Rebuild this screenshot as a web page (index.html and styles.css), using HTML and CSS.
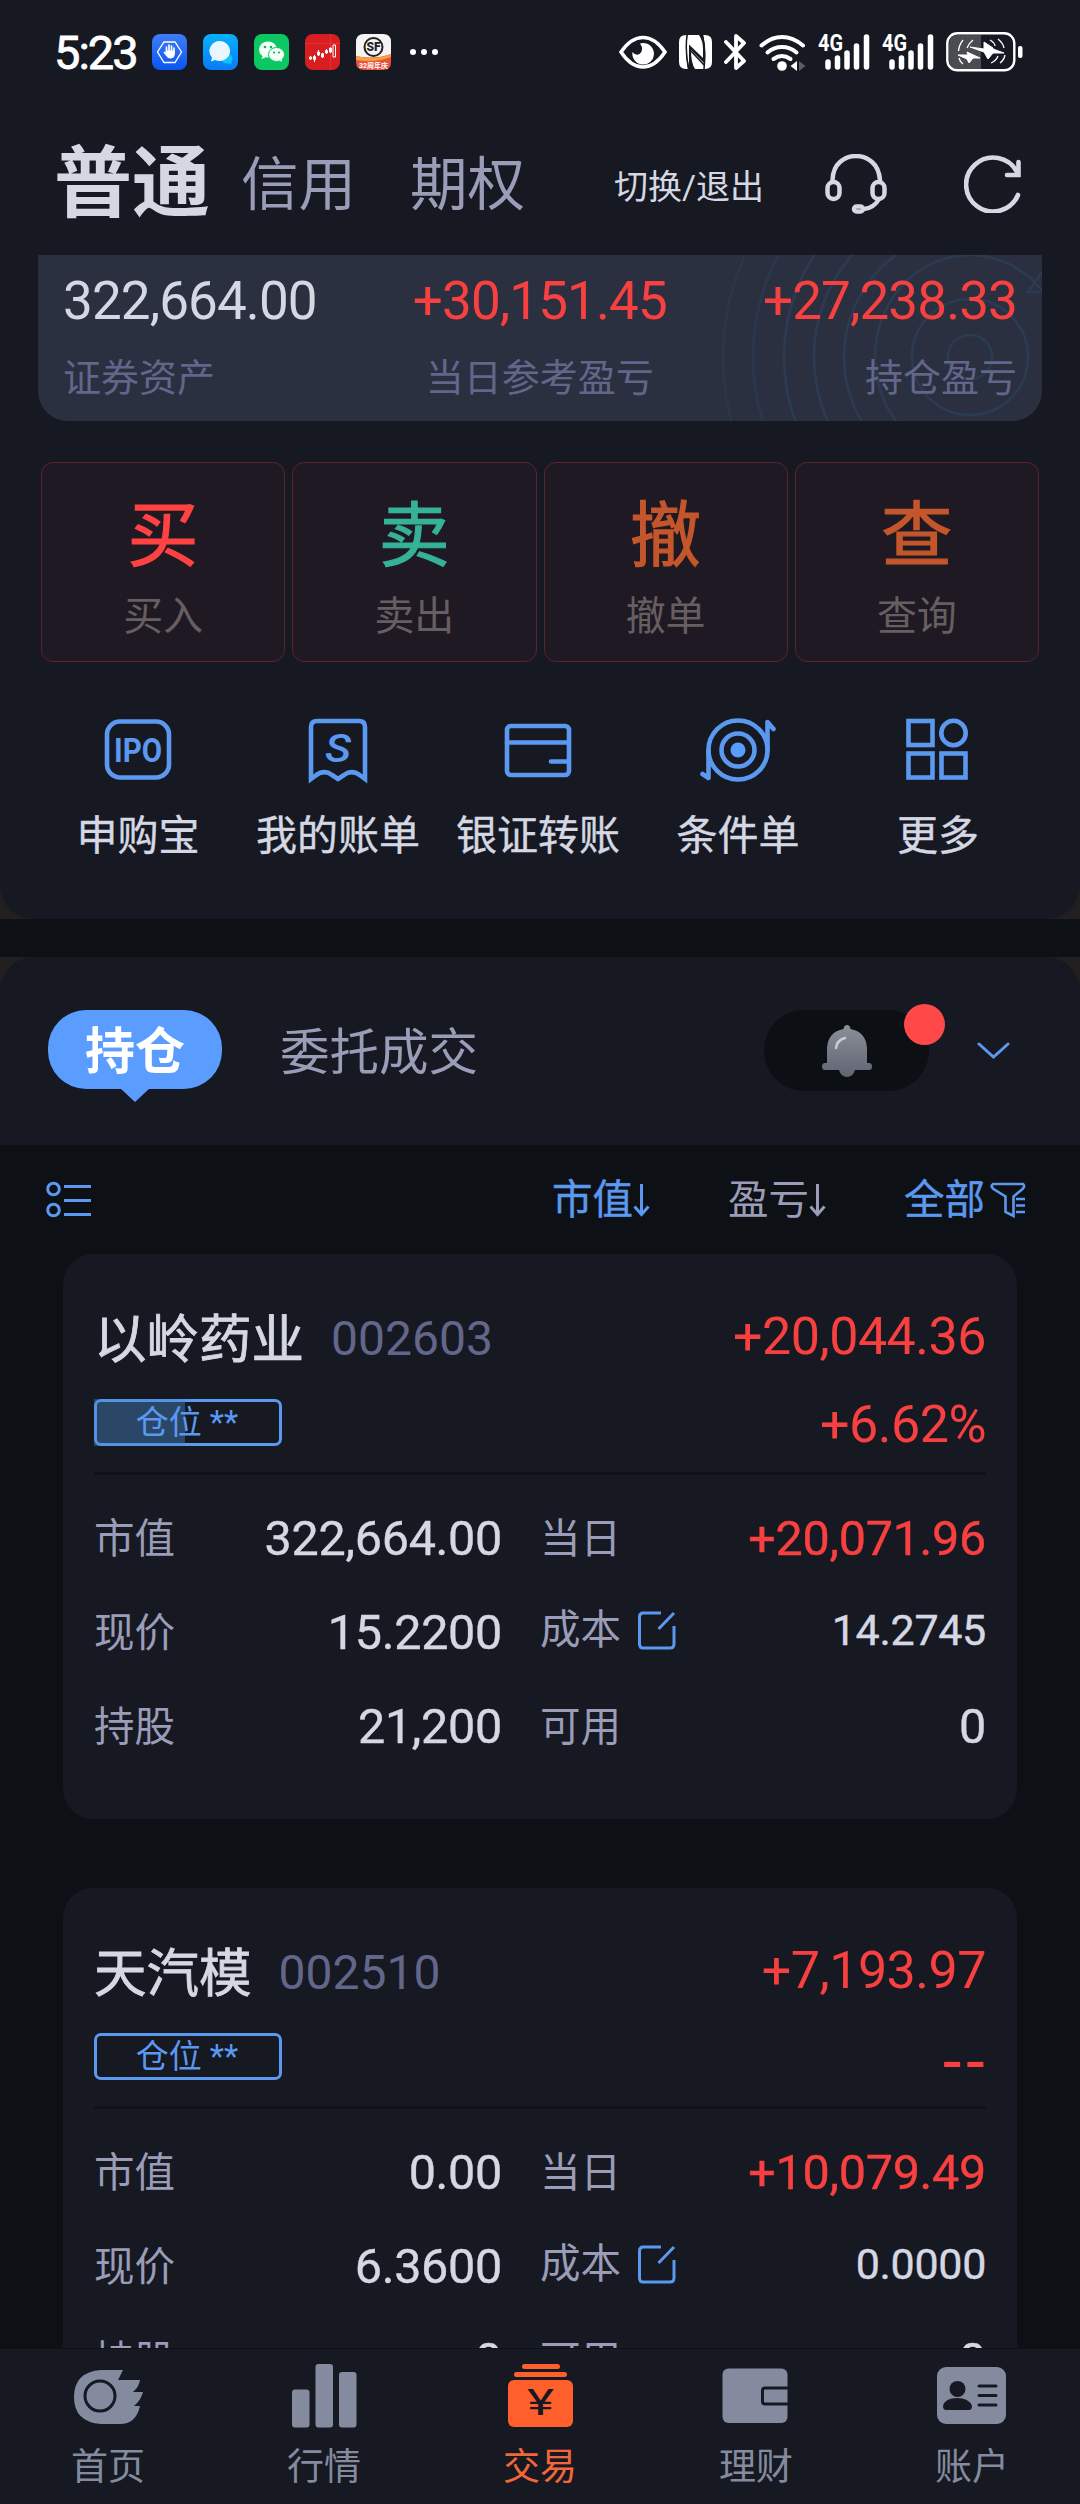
FILE: index.html
```html
<!DOCTYPE html>
<html lang="zh-CN">

<head>
  <meta charset="UTF-8">
  <meta name="viewport" content="width=device-width, initial-scale=1.0">
  <title>交易</title>
  <link rel="stylesheet" href="styles.css">
</head>

<body>
  <div class="screen">
    <div class="top-wrap">
      <div class="top">
        <!-- 状态栏 -->
        <div class="status">
          <span class="time">5:23</span>
          <div class="apps">
            <svg width="35" height="36" viewBox="0 0 35 36">
              <defs>
                <linearGradient id="g1" x1="0" y1="0" x2="0" y2="1"><stop offset="0" stop-color="#3f7cf7"/><stop offset="1" stop-color="#0b55f0"/></linearGradient>
              </defs>
              <rect width="35" height="36" rx="8" fill="url(#g1)"/>
              <path d="M12 8h11l6.500 10-6.500 10.500h-11L5.500 18z" fill="none" stroke="#fff" stroke-width="1.300"/>
              <path d="M14.500 18v-5M17 17v-6M19.500 17v-5M22 19v-5" stroke="#fff" stroke-width="1.700" stroke-linecap="round"/>
              <path d="M13.500 16.500h9.300v4q-.5 4-4.500 4-2.500 0-4.500-3l-2.500-3.200 1.200-.8 1.800 1.500z" fill="#fff"/>
            </svg>
            <svg width="35" height="36" viewBox="0 0 35 36">
              <defs>
                <linearGradient id="g2" x1="0" y1="0" x2="0" y2="1"><stop offset="0" stop-color="#08b0fb"/><stop offset="1" stop-color="#087cf5"/></linearGradient>
              </defs>
              <rect width="35" height="36" rx="8" fill="url(#g2)"/>
              <path d="M20 28a5.500 5 0 1 1 8 0l1 2-3-.5q-4 .5-6-1.500z" fill="#10c3ff"/>
              <path d="M17 7a10.500 10 0 1 1-5 19l-4 1.500 1-4A10.500 10 0 0 1 17 7z" fill="#e8f6ff"/>
            </svg>
            <svg width="35" height="36" viewBox="0 0 35 36">
              <rect width="35" height="36" rx="8" fill="#0cc863"/>
              <ellipse cx="14" cy="15.500" rx="9" ry="8" fill="#f4fff8"/>
              <path d="M9 21l-1.500 4 5-2z" fill="#f4fff8"/>
              <ellipse cx="22.500" cy="20.500" rx="8" ry="7" fill="#f4fff8" stroke="#0cc863"/>
              <path d="M25 26l3 2-.5-4z" fill="#f4fff8"/>
              <g fill="#0cb75a"><circle cx="11" cy="13" r="1.300"/><circle cx="17" cy="13" r="1.300"/><circle cx="20" cy="18.500" r="1.100"/><circle cx="25" cy="18.500" r="1.100"/></g>
            </svg>
            <svg width="35" height="36" viewBox="0 0 35 36">
              <rect width="35" height="36" rx="8" fill="#d91e22"/>
              <path d="M0 9.500h35M25.500 0v36" stroke="#e24145" stroke-width=".6"/>
              <g stroke="#fff" fill="none">
                <path d="M5.500 22v4M9.500 21v7M13.500 16v6M17.500 19v5M21.500 15v5M25.500 14v5" stroke-width="1"/>
                <path d="M4.500 23h2v2h-2zM8.500 22.500h2v3h-2zM12.500 18h2v3h-2zM16.500 19.500h2v3.500h-2zM20.500 16.500h2v2.500h-2zM24.500 14h2v4h-2zM28 11h2.500v12H28z" stroke-width="1"/>
              </g>
            </svg>
            <svg width="35" height="36" viewBox="0 0 35 36">
              <path d="M8 0h19q8 0 8 8v16H0V8q0-8 8-8z" fill="#f5f3f3"/>
              <path d="M0 22q18 4 35-2v8q0 8-8 8H8q-8 0-8-8z" fill="#e8553c"/>
              <path d="M0 22q18 5 35-2v3q-16 6-35 3z" fill="#f5a33a"/>
              <circle cx="17.500" cy="13" r="9" fill="none" stroke="#222" stroke-width="2"/>
              <text x="17.500" y="17.200" class="sf">SF</text>
              <text x="17.500" y="33.500" class="sf-year">32周年庆</text>
            </svg>
          </div>
          <svg class="more-dots" width="28" height="8" viewBox="0 0 28 8" fill="#fff"><circle cx="3" cy="4" r="3"/><circle cx="14" cy="4" r="3"/><circle cx="25" cy="4" r="3"/></svg>

          <div class="signals">
            <svg width="48" height="36" viewBox="0 0 48 36">
              <path d="M2 18Q12 3.500 24 3.500T46 18Q36 33 24 33T2 18z" fill="none" stroke="#fff" stroke-width="3.500"/>
              <path d="M24 9a10.800 10.800 0 1 1-10.500 9q3 4 7 2 5-4 .500-10.500z" fill="#fff"/>
            </svg>
            <svg width="33" height="34" viewBox="0 0 33 34">
              <path d="M7 0h1Q6 17 9 34H7q-7 0-7-7V7q0-7 7-7z" fill="#fff"/>
              <path d="M8.500 0H20q4 6 4 14v9L10 9.500V31Q6 14 8.500 0z" fill="#fff"/>
              <path d="M12 15l13 13V34h-9q-4-6-4-19z" fill="#fff"/>
              <path d="M24 0h2q7 0 7 7v20q0 7-7 7h-1q3-17-1-34z" fill="#fff"/>
              <path d="M12 16l13 14M8 0Q6 17 9.500 34M23.500 0q3.500 14 1.500 34" fill="none" stroke="#161922" stroke-width="1.500"/>
            </svg>
            <svg width="23" height="38" viewBox="0 0 23 38">
              <path d="M2 9l18 19-8 7V3l8 7L2 29" fill="none" stroke="#fff" stroke-width="3.800" stroke-linejoin="round" stroke-linecap="round"/>
            </svg>
            <svg width="47" height="38" viewBox="0 0 47 38">
              <g fill="none" stroke="#fff" stroke-width="4" stroke-linecap="round"><path d="M2.500 12.500Q12 4 23 4t21 8.500"/><path d="M8.500 19.500Q15 14 23 14t14.500 5.500"/><path d="M14.500 26q8.500-6 17 0"/></g>
              <circle cx="23" cy="33" r="4.800" fill="#fff"/>
              <path d="M38 28v10l-6.500-5z" fill="#fff"/><path d="M40 28v10l6.500-5z" fill="#5a5d66"/>
            </svg>
            <svg width="52" height="50" viewBox="0 -6 52 50">
              <text x="0" y="18" class="g4" textLength="25" lengthAdjust="spacingAndGlyphs">4G</text>
              <path d="M10 29v5M19.500 25v9M29 20v14M38.500 13v21M48.500 4v30" stroke="#fff" stroke-width="5.500" stroke-linecap="round"/>
            </svg>
            <svg width="52" height="50" viewBox="0 -6 52 50">
              <text x="0" y="18" class="g4" textLength="25" lengthAdjust="spacingAndGlyphs">4G</text>
              <path d="M10 29v5M19.500 25v9M29 20v14M38.500 13v21M48.500 4v30" stroke="#fff" stroke-width="5.500" stroke-linecap="round"/>
            </svg>
            <svg width="77" height="40" viewBox="0 0 77 40">
              <path d="M12 3h23v34H12q-9 0-9-9V12q0-9 9-9z" fill="#4a4c52"/>
              <rect x="1.300" y="1.300" width="67" height="37" rx="10" fill="none" stroke="#fff" stroke-width="2.400"/>
              <rect x="72" y="14" width="4.500" height="12" rx="2" fill="#fff"/>
              <path d="M12 23l10 0-1-3 13 6-7 0-4 5-2-4zM24 15l14 2 0-7 9 6 0 1 11 4-11 0-5 6-4-7z" fill="#fff" stroke="#fff"/>
              <path d="M17 8q-4 5-4.500 11M27 8q-4 3-6 8M44 8q5 3 5 6M52 7q5 4 6 9M13 26q1 4 4 6M45 31q5-2 7-7M54 31q4-3 5-8" fill="none" stroke="#fff" stroke-width="1.300"/>
            </svg>
          </div>
        </div>

        <!-- 顶部导航 -->
        <div class="header">
          <span class="h-tab active">普通</span>
          <span class="h-tab">信用</span>
          <span class="h-tab">期权</span>
          <span class="switch">切换/退出</span>
          <svg class="headset" width="62" height="60" viewBox="0 0 62 60" fill="none" stroke="#d5d8e3" stroke-width="4.500">
            <path d="M7.500 28V26Q8 14 15 8t16-6 16 6 8 18v2"/>
            <rect x="2.500" y="28" width="12" height="17" rx="6"/>
            <rect x="47.500" y="28" width="12" height="17" rx="6"/>
            <path d="M54 45q-5 9-15 10"/>
            <rect x="29" y="52.500" width="9" height="5" rx="2.500"/>
          </svg>
          <svg class="refresh" width="58" height="58" viewBox="0 0 58 58" fill="none" stroke="#d5d8e3" stroke-width="4.600" stroke-linecap="round">
            <path d="M54 40A27 27 0 1 1 53 17"/>
            <path d="M54.500 7v13H43"/>
          </svg>
        </div>

        <div class="asset">
          <svg class="rings" width="330" height="166" viewBox="0 0 330 166" fill="none" stroke="#2b3b52" stroke-width="2.600">
            <circle cx="258" cy="102" r="22"/>
            <circle cx="258" cy="102" r="58"/>
            <ellipse cx="258" cy="102" rx="95" ry="102"/>
            <circle cx="258" cy="102" r="126"/>
            <circle cx="258" cy="102" r="156"/>
            <circle cx="258" cy="102" r="186"/>
            <circle cx="258" cy="102" r="217" opacity=".8"/>
            <circle cx="258" cy="102" r="247" opacity=".5"/>
            <path d="M330 17l-14 20h14"/>
          </svg>
          <div class="asset-item">
            <div class="asset-num">322,664.00</div>
            <div class="asset-label">证券资产</div>
          </div>
          <div class="asset-item center">
            <div class="asset-num red">+30,151.45</div>
            <div class="asset-label">当日参考盈亏</div>
          </div>
          <div class="asset-item right">
            <div class="asset-num red">+27,238.33</div>
            <div class="asset-label">持仓盈亏</div>
          </div>
        </div>

        <div class="trade">
          <div class="trade-btn"><b class="buy">买</b><span>买入</span></div>
          <div class="trade-btn"><b class="sell">卖</b><span>卖出</span></div>
          <div class="trade-btn"><b class="orange">撤</b><span>撤单</span></div>
          <div class="trade-btn"><b class="orange">查</b><span>查询</span></div>
        </div>

        <div class="quick">
          <div class="quick-item">
            <svg width="70" height="70" viewBox="0 0 70 70">
              <rect x="4" y="6.500" width="62" height="56" rx="13"/>
              <text x="35" y="46.500" class="ipo" textLength="48" lengthAdjust="spacingAndGlyphs">IPO</text>
            </svg>
            <span>申购宝</span>
          </div>
          <div class="quick-item">
            <svg width="70" height="70" viewBox="0 0 70 70">
              <path d="M8 64V12q0-6 6-6h42q6 0 6 6v52l-4-3q-9-7-17-1l-6 4-6-4q-8-6-17 1z"/>
              <text x="35" y="47" class="bill-s" textLength="26" lengthAdjust="spacingAndGlyphs">S</text>
            </svg>
            <span>我的账单</span>
          </div>
          <div class="quick-item">
            <svg width="70" height="70" viewBox="0 0 70 70">
              <rect x="4" y="11" width="62" height="49" rx="4"/>
              <path d="M4 27.500h62M48 46.500h18" stroke-linecap="round"/>
            </svg>
            <span>银证转账</span>
          </div>
          <div class="quick-item">
            <svg width="78" height="70" viewBox="0 0 78 70">
              <circle cx="39" cy="35" r="29.500"/>
              <circle cx="39" cy="35" r="16.500"/>
              <circle cx="39" cy="35" r="7.500" class="solid"/>
              <path d="M9.500 35v28l-6-4M68.500 35V7l6 7" stroke-linecap="round" stroke-linejoin="round"/>
            </svg>
            <span>条件单</span>
          </div>
          <div class="quick-item">
            <svg width="70" height="70" viewBox="0 0 70 70">
              <rect x="5.500" y="6" width="24" height="24"/>
              <circle cx="50.500" cy="18" r="12.200"/>
              <rect x="5.500" y="38.500" width="24" height="24"/>
              <rect x="38.500" y="38.500" width="24" height="24"/>
            </svg>
            <span>更多</span>
          </div>
        </div>
      </div>
    </div>

    <!-- 持仓 / 委托 -->
    <div class="tabs-wrap">
      <div class="tabs">
        <div class="tab-pill">持仓</div>
        <div class="tab">委托成交</div>
        <div class="bell">
          <svg width="52" height="54" viewBox="0 0 52 54">
            <defs>
              <linearGradient id="bell" x1="0" y1="0" x2="0" y2="1"><stop offset="0" stop-color="#8b8f99"/><stop offset="1" stop-color="#5f6572"/></linearGradient>
            </defs>
            <path d="M26 1q3 0 3.500 4Q45 8 46 24v15h2q3 0 3 3.500T48 46H34q-2 7-8 7t-8-7H4q-3 0-3-3.500T4 39h2V24Q7 8 22.500 5 23 1 26 1z" fill="url(#bell)"/>
            <path d="M15 24q1-8 9-10" fill="none" stroke="#c9ccd3" stroke-width="2.500" stroke-linecap="round"/>
          </svg>
          <i class="badge"></i>
        </div>
        <svg class="chevron" width="33" height="18" viewBox="0 0 33 18"><path d="M2 2l14.500 13L31 2" fill="none" stroke="#5b98f0" stroke-width="3" stroke-linecap="round"/></svg>
      </div>
    </div>

    <div class="filter">
      <svg class="list-icon" width="46" height="38" viewBox="0 0 46 38" fill="none" stroke="#5b98f0" stroke-width="3">
        <circle cx="7.500" cy="8" r="5.800"/>
        <circle cx="7.500" cy="29" r="5.800"/>
        <path d="M18 5.500h27M18 19.500h27M18 33.500h27"/>
      </svg>
      <span class="sort on">市值<svg width="17" height="34" viewBox="0 0 17 34"><path d="M8.500 1v30M1.500 23.500l7 8 7-8"/></svg></span>
      <span class="sort">盈亏<svg width="17" height="34" viewBox="0 0 17 34"><path d="M8.500 1v30M1.500 23.500l7 8 7-8"/></svg></span>
      <span class="sort all on">全部<svg width="36" height="36" viewBox="0 0 36 36"><path d="M3 2h30q2.500 2-.5 5l-9 7.500V34l-8-4V14.500L3.500 7Q0 4 3 2zM26 17h9M26 23.500h9M26 30h9"/></svg></span>
    </div>

    <div class="list">
      <div class="stock">
        <div class="stock-head">
          <span class="name">以岭药业</span>
          <span class="code">002603</span>
          <span class="profit">+20,044.36</span>
        </div>
        <div class="stock-sub">
          <span class="tag"><i class="tag-fill" style="width: 50%"></i><em>仓位 **</em></span>
          <span class="profit">+6.62%</span>
        </div>
        <div class="line"></div>
        <div class="grid">
          <div class="cell"><label>市值</label><span>322,664.00</span></div>
          <div class="cell"><label>当日</label><span class="red">+20,071.96</span></div>
          <div class="cell"><label>现价</label><span>15.2200</span></div>
          <div class="cell cost"><label>成本</label><svg width="38" height="39" viewBox="0 0 38 39"><path d="M23 2H5Q1.500 2 1.500 6v27q0 4 3.500 4h27q4 0 4-4V15M20.500 18L36 2"/></svg><span>14.2745</span></div>
          <div class="cell"><label>持股</label><span>21,200</span></div>
          <div class="cell"><label>可用</label><span>0</span></div>
        </div>
      </div>

      <div class="stock">
        <div class="stock-head">
          <span class="name">天汽模</span>
          <span class="code">002510</span>
          <span class="profit">+7,193.97</span>
        </div>
        <div class="stock-sub">
          <span class="tag"><em>仓位 **</em></span>
          <span class="profit dash">--</span>
        </div>
        <div class="line"></div>
        <div class="grid">
          <div class="cell"><label>市值</label><span>0.00</span></div>
          <div class="cell"><label>当日</label><span class="red">+10,079.49</span></div>
          <div class="cell"><label>现价</label><span>6.3600</span></div>
          <div class="cell cost"><label>成本</label><svg width="38" height="39" viewBox="0 0 38 39"><path d="M23 2H5Q1.500 2 1.500 6v27q0 4 3.500 4h27q4 0 4-4V15M20.500 18L36 2"/></svg><span>0.0000</span></div>
          <div class="cell"><label>持股</label><span>0</span></div>
          <div class="cell"><label>可用</label><span>0</span></div>
        </div>
      </div>
    </div>

    <!-- 底部导航 -->
    <div class="nav">
      <div class="nav-item">
        <svg width="70" height="70" viewBox="0 0 70 70">
          <path d="M28 10h22l-5 10h22q-1 7-7 12h10q-2 8-9 14h6q-4 18-20 18H28Q1 62 1 37T28 10z"/>
          <circle cx="27" cy="36" r="15" fill="none" stroke="#161922" stroke-width="3"/>
        </svg>
        <span>首页</span>
      </div>
      <div class="nav-item">
        <svg width="70" height="70" viewBox="0 0 70 70">
          <rect x="3" y="29.500" width="17.500" height="38" rx="3"/>
          <rect x="26.500" y="4" width="17.500" height="63.500" rx="3"/>
          <rect x="50" y="12" width="17.500" height="55.500" rx="3"/>
        </svg>
        <span>行情</span>
      </div>
      <div class="nav-item on">
        <svg width="70" height="70" viewBox="0 0 70 70">
          <rect x="17" y="4" width="38" height="5" rx="2.500"/>
          <rect x="9" y="12" width="53" height="5" rx="2.500"/>
          <rect x="3" y="20" width="65" height="47" rx="6"/>
          <text x="35.500" y="54.500" class="yen" textLength="27" lengthAdjust="spacingAndGlyphs">¥</text>
        </svg>
        <span>交易</span>
      </div>
      <div class="nav-item">
        <svg width="70" height="70" viewBox="0 0 70 70">
          <rect x="1.500" y="8.500" width="65" height="54.500" rx="6"/>
          <path d="M67 28H44q-2.500 0-2.500 2.500v11q0 2.500 2.500 2.500h23" fill="none" stroke="#161922" stroke-width="3"/>
        </svg>
        <span>理财</span>
      </div>
      <div class="nav-item">
        <svg width="70" height="70" viewBox="0 0 70 70">
          <rect x="0" y="7" width="69" height="57" rx="9"/>
          <g fill="#161922">
            <circle cx="20.500" cy="29" r="8"/>
            <path d="M6 46q2-8 14-8t15 8q0 4-3 4H9q-3 0-3-4z"/>
          </g>
          <path d="M42 26h17M42 35.500h17M42 45h17" stroke="#161922" stroke-width="3" stroke-linecap="round"/>
        </svg>
        <span>账户</span>
      </div>
    </div>
  </div>
</body>

</html>
```
FILE: styles.css
```css
* {
  box-sizing: border-box;
}

body {
  margin: 0;
  background: #0d1014;
  font-family: Roboto, "Noto Sans CJK SC", sans-serif;
  color: #d5d8e3;
}

svg {
  flex: none;
  display: block;
}

.screen {
  width: 1080px;
  height: 2504px;
  display: flex;
  flex-direction: column;
  overflow: hidden;
}

/* 圆角外露出的底色 */
.top-wrap,
.tabs-wrap {
  background: #211f1f;
  flex: none;
}

.top {
  height: 919px;
  background: #161922;
  border-radius: 0 0 34px 34px;
}

.red {
  color: #f94040;
}

/* 状态栏 */
.status {
  height: 103px;
  display: flex;
  align-items: center;
  padding-left: 54px;
  color: #fff;
}

.time {
  width: 98px;
  font-size: 47px;
  letter-spacing: -2px;
  line-height: 60px;
  padding-top: 2px;
  -webkit-text-stroke: 0.8px #fff;
}

.apps {
  display: flex;
  gap: 16px;
}

.sf {
  font-size: 12px;
  font-weight: 900;
  text-anchor: middle;
  fill: #222;
}

.sf-year {
  font-size: 7px;
  font-weight: 700;
  text-anchor: middle;
  fill: #fff;
}

.more-dots {
  margin-left: 19px;
}

.signals {
  display: flex;
  align-items: center;
  gap: 12px;
  margin-left: 181px;
}

.g4 {
  font-size: 24px;
  font-weight: 700;
  fill: #fff;
}

/* 顶部导航 */
.header {
  height: 152px;
  padding: 9px 0 0 54px;
  display: flex;
  align-items: center;
}

.h-tab {
  width: 169px;
  padding-top: 4px;
  font-size: 57.500px;
  line-height: 80px;
  color: #9a9cb8;
}

.h-tab.active {
  width: 187px;
  padding-top: 3px;
  font-size: 78px;
  font-weight: 700;
  color: #d5d8e3;
}

.switch {
  width: 176px;
  margin-left: 35px;
  font-size: 34px;
  line-height: 50px;
  padding-top: 6px;
  white-space: nowrap;
}

.headset {
  margin-left: 35px;
}

.refresh {
  margin-left: 77px;
}

/* 资产 */
.asset {
  position: relative;
  width: 1004px;
  height: 166px;
  margin: 0 auto 0 38px;
  padding: 16px 25px 0 25px;
  display: flex;
  justify-content: space-between;
  background: #2a3040;
  border-radius: 0 0 30px 30px;
  overflow: hidden;
}

.rings {
  position: absolute;
  right: 0;
  top: 0;
}

.asset-item {
  position: relative;
}

.center {
  text-align: center;
}

.right {
  text-align: right;
}

.asset-num {
  font-size: 53px;
  line-height: 61px;
  letter-spacing: -0.9px;
}

.asset-label {
  margin-top: 16px;
  font-size: 38px;
  line-height: 60px;
  color: #62668a;
}

/* 买卖撤查 */
.trade {
  display: grid;
  grid-template-columns: repeat(4, 1fr);
  gap: 7px;
  padding: 0 41px;
  margin-top: 41px;
}

.trade-btn {
  height: 200px;
  padding-top: 33px;
  display: flex;
  flex-direction: column;
  align-items: center;
  background: #1e1922;
  border: 1px solid #5a242c;
  border-radius: 12px;
}

.trade-btn b {
  font-size: 71px;
  font-weight: 400;
  line-height: 80px;
  -webkit-text-stroke: 1.200px currentColor;
  stroke-linejoin: round;
}

.trade-btn span {
  margin-top: 16px;
  font-size: 40px;
  line-height: 50px;
  color: #665e61;
}

.buy {
  color: #ff4242;
}

.sell {
  color: #35b297;
}

.orange {
  color: #c4562c;
}

/* 快捷入口 */
.quick {
  display: grid;
  grid-template-columns: repeat(5, 200px);
  margin-left: 38px;
  padding-top: 53px;
}

.quick-item {
  display: flex;
  flex-direction: column;
  align-items: center;
}

.quick-item svg {
  fill: none;
  stroke: #5b98f0;
  stroke-width: 4.600;
}

.quick-item .solid {
  fill: #5b9dff;
  stroke: none;
}

.quick-item span {
  margin-top: 26px;
  font-size: 41px;
  line-height: 50px;
  -webkit-text-stroke: 0.4px currentColor;
}

.ipo,
.bill-s {
  font-weight: 700;
  text-anchor: middle;
  fill: #5b98f0;
  stroke: none;
}

.ipo {
  font-size: 33px;
}

.bill-s {
  font-size: 39px;
  font-style: italic;
  font-weight: 500;
}

/* 持仓标签 */
.tabs-wrap {
  margin-top: 38px;
}

.tabs {
  height: 188px;
  padding: 53px 0 0 48px;
  display: flex;
  align-items: flex-start;
  background: #161922;
  border-radius: 34px 34px 0 0;
}

.tab-pill {
  position: relative;
  width: 174px;
  height: 79px;
  border-radius: 38px;
  background: #5b9dff;
  color: #fff;
  font-size: 50px;
  font-weight: 700;
  line-height: 84px;
  text-align: center;
}

.tab-pill::after {
  content: "";
  position: absolute;
  left: 72px;
  top: 78px;
  border: 15px solid transparent;
  border-top: 14px solid #5b9dff;
  border-bottom: 0;
}

.tab {
  margin-left: 58px;
  width: 484px;
  font-size: 49.500px;
  line-height: 86px;
  color: #9a9cb8;
}

.bell {
  position: relative;
  width: 165px;
  height: 81px;
  border-radius: 40px;
  background: #0c0f13;
  display: flex;
  align-items: center;
  justify-content: center;
}

.badge {
  position: absolute;
  left: 140px;
  top: -6px;
  width: 41px;
  height: 41px;
  border-radius: 50%;
  background: #ff4848;
}

.chevron {
  margin: 32px 0 0 48px;
}

/* 排序 */
.filter {
  height: 109px;
  flex: none;
  padding-left: 46px;
  display: flex;
  align-items: center;
}

.list-icon {
  margin-right: 460px;
}

.sort {
  width: 176px;
  display: flex;
  align-items: center;
  font-size: 40.500px;
  line-height: 50px;
  color: #9a9cb8;
}

.sort.on {
  color: #5b98f0;
  -webkit-text-stroke: 0.4px currentColor;
}

.sort svg {
  fill: none;
  stroke: currentColor;
  stroke-width: 3;
}

.all svg {
  margin-left: 5px;
  stroke-width: 2.600;
}

/* 股票列表 */
.list {
  flex: 1;
  min-height: 0;
  overflow: hidden;
}

.stock {
  height: 565px;
  margin: 0 63px 69px;
  padding: 50px 31px 0;
  background: #161922;
  border-radius: 30px;
}

.stock-head {
  height: 70px;
  display: flex;
  align-items: center;
}

.name {
  font-size: 52.500px;
  line-height: 70px;
  padding-top: 1px;
  -webkit-text-stroke: 0.8px currentColor;
}

.code {
  margin-left: 27px;
  padding-bottom: 2px;
  font-size: 48px;
  color: #62668a;
}

.profit {
  margin-left: auto;
  font-size: 52px;
  line-height: 60px;
  letter-spacing: -0.5px;
  color: #f94040;
  padding-bottom: 4px;
}

.stock-sub {
  height: 60px;
  margin-top: 18px;
  display: flex;
  align-items: center;
}

.stock-sub .profit {
  padding: 5px 0 0;
}

/* 无盈亏比例时的占位横线 */
.stock-sub .dash {
  font-family: "Noto Sans", sans-serif;
  font-size: 66px;
  letter-spacing: 2px;
  padding-top: 0;
  margin-right: -2px;
}

.tag {
  position: relative;
  width: 188px;
  height: 47px;
  border: 3px solid #5b98f0;
  border-radius: 7px;
  text-align: center;
}

.tag-fill {
  position: absolute;
  left: -3px;
  top: -3px;
  height: 47px;
  background: rgba(75, 140, 210, 0.4);
}

.tag em {
  position: relative;
  display: block;
  padding-right: 2px;
  font-style: normal;
  font-size: 33px;
  line-height: 42px;
  color: #5b98f0;
}

.line {
  height: 3px;
  margin-top: 20px;
  background: #101217;
}

.grid {
  margin-top: 17px;
  display: grid;
  grid-template-columns: 408px 446px;
  column-gap: 38px;
}

.cell {
  height: 94px;
  display: flex;
  align-items: center;
}

.cell label {
  font-size: 40.500px;
  color: #9a9cb8;
  line-height: 50px;
}

.cell span {
  margin-left: auto;
  font-size: 48.500px;
  line-height: 60px;
  letter-spacing: -0.3px;
  -webkit-text-stroke: 0.4px currentColor;
}

.cell.cost {
  padding-bottom: 6px;
}

.cost svg {
  margin-left: 17px;
  fill: none;
  stroke: #5b98f0;
  stroke-width: 3;
}

.cost span {
  font-size: 43px;
  letter-spacing: -0.3px;
}

/* 底部导航 */
.nav {
  flex: none;
  height: 156px;
  display: grid;
  grid-template-columns: repeat(5, 1fr);
  background: #161922;
  border-top: 1px solid #0f1116;
}

.nav-item {
  padding-top: 11px;
  display: flex;
  flex-direction: column;
  align-items: center;
  color: #848b9f;
  fill: #848b9f;
}

.nav-item span {
  margin-top: 16px;
  font-size: 37px;
  line-height: 44px;
}

.nav-item.on {
  color: #f2673a;
  fill: #ff5f2a;
}

.yen {
  font-size: 36px;
  text-anchor: middle;
  fill: #161922;
}
```
